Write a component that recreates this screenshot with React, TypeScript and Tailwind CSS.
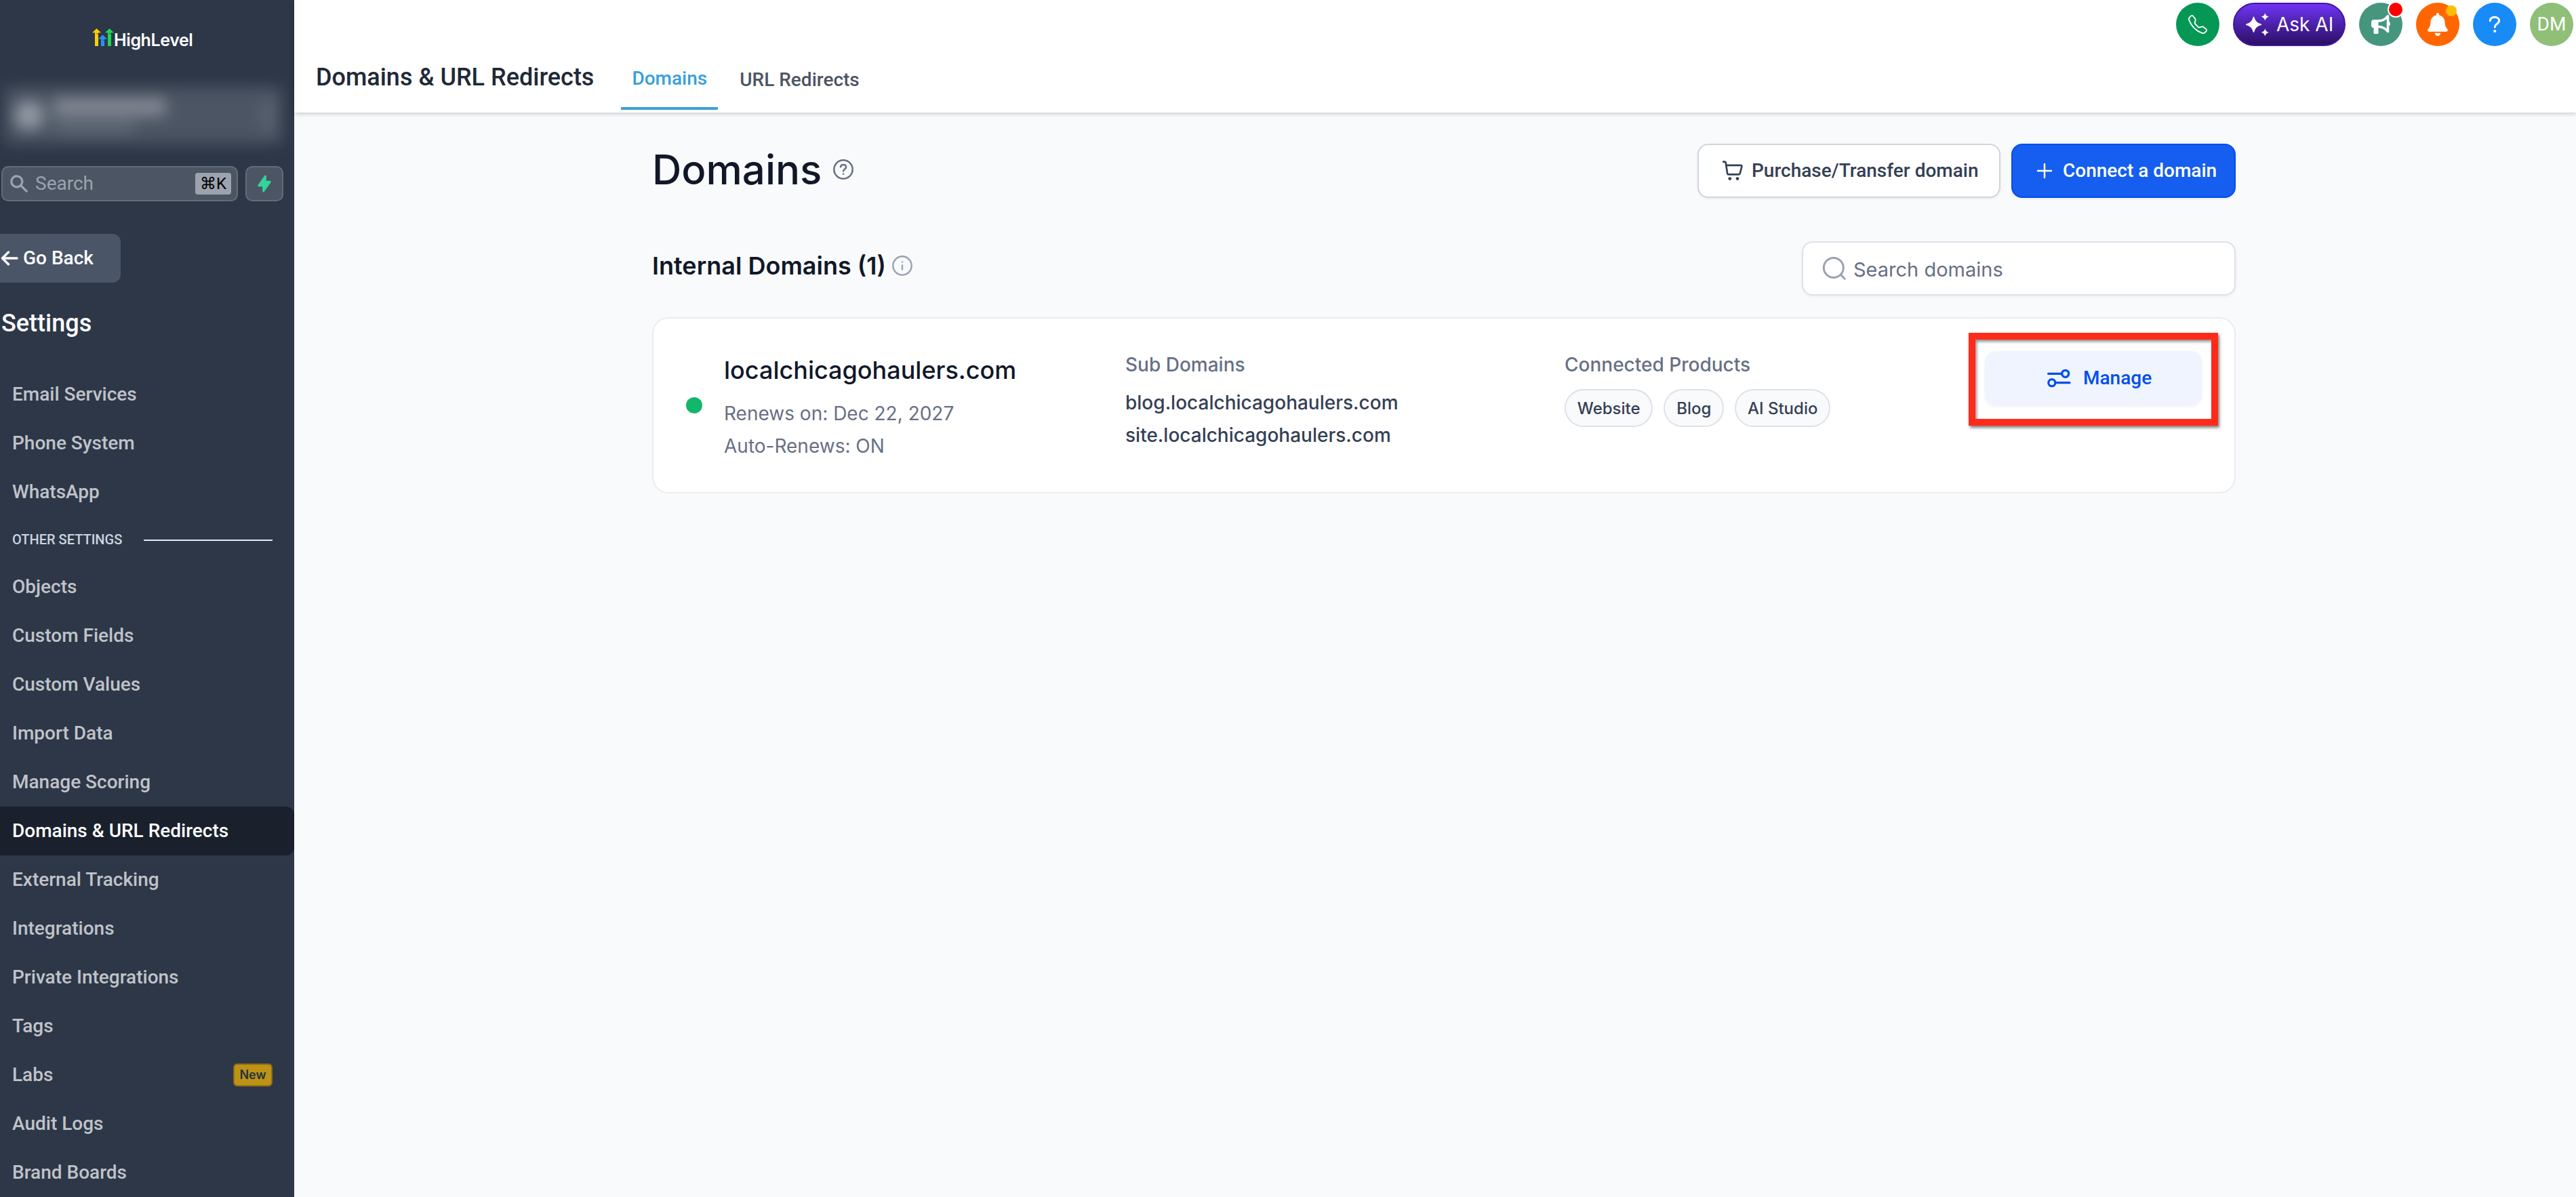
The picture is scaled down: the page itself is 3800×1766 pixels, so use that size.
import type { ReactNode } from "react";
import { BsTelephone } from "react-icons/bs";
import { FaBell, FaBullhorn } from "react-icons/fa6";
import { HiLightningBolt, HiSearch } from "react-icons/hi";

const primaryItems = ["Email Services", "Phone System", "WhatsApp"];

const otherItems: { label: string; active?: boolean; badge?: string }[] = [
  { label: "Objects" },
  { label: "Custom Fields" },
  { label: "Custom Values" },
  { label: "Import Data" },
  { label: "Manage Scoring" },
  { label: "Domains & URL Redirects", active: true },
  { label: "External Tracking" },
  { label: "Integrations" },
  { label: "Private Integrations" },
  { label: "Tags" },
  { label: "Labs", badge: "New" },
  { label: "Audit Logs" },
  { label: "Brand Boards" },
];

function Logo() {
  return (
    <div className="flex h-[46px] items-start pl-[136px]">
      <svg viewBox="0 0 32 28" className="mt-[2px] h-7 w-8 shrink-0">
        <path d="M0 6.3 6.5 0 13 6.3H9V26H4V6.3Z" fill="#ffcf00" />
        <path d="M9 15.8 15.5 9.2 22 15.8H18V26h-5V15.8Z" fill="#2b8ff5" />
        <path d="M19 6.3 25.5 0 32 6.3H28V26h-5V6.3Z" fill="#1ed654" />
        <path d="m4.500 7 4.500 2.600V7ZM13 16.500l5 2V16.500ZM23.500 7 28 9.600V7Z" fill="#000" fillOpacity=".28" />
      </svg>
      <span className="mt-px text-[25px] leading-9 font-semibold tracking-[-0.4px] text-white">HighLevel</span>
    </div>
  );
}

function NavItem({ label, active, badge }: { label: string; active?: boolean; badge?: string }) {
  return (
    <div
      className={
        active
          ? "flex h-[72px] items-center justify-between rounded-r-xl bg-[#1a202c] pr-8 pl-[18px] text-white"
          : "flex h-[72px] items-center justify-between pr-8 pl-[18px] text-[#c0c3c8]"
      }
    >
      <span>{label}</span>
      {badge && (
        <span className="flex h-[34px] w-[58px] items-center justify-center rounded-md border-2 border-[#8d6c17] bg-[#be9214] font-[Inter] text-[18px] leading-none font-semibold text-[#1f3442]">
          {badge}
        </span>
      )}
    </div>
  );
}

function Sidebar() {
  return (
    <aside className="flex h-full w-[434px] shrink-0 flex-col overflow-hidden bg-[#2d3748] pt-10 font-[Roboto] text-[28px] font-medium">
      <div className="font-[Inter]">
        <Logo />
      </div>

      <div className="mr-[18px] ml-[6px] mt-[42px] flex h-[84px] items-center rounded-lg bg-[#4b5563] pl-[15px] blur-[11px]">
        <div className="h-11 w-11 rounded-full bg-[#9299a3]" />
        <div className="ml-[14px] flex flex-1 flex-col gap-2">
          <div className="h-[26px] w-[166px] bg-[#858995]" />
          <div className="h-4 w-[120px] bg-[#616c77]" />
        </div>
        <div className="mr-3 h-12 w-4 bg-[#5c6674]" />
      </div>

      <div className="mt-[33px] flex gap-[11px] pl-[2px] font-normal">
        <div className="flex h-[52px] w-[349px] items-center rounded-[10px] border-2 border-[#646c79] bg-[#4b5563] pr-2">
          <HiSearch className="-mt-px ml-[8px] size-8 text-[#9ca3af]" />
          <span className="mb-[1px] ml-[8px] flex-1 text-[#9ca3af]">Search</span>
          <span className="flex h-8 w-[53px] items-center justify-center rounded bg-[#9ca3af] text-[24px] leading-none text-black">⌘K</span>
        </div>
        <div className="flex h-[52px] w-14 items-center justify-center rounded-[10px] border-2 border-[#646c79] bg-[#4b5563]">
          <HiLightningBolt className="size-7 text-[#34d399]" />
        </div>
      </div>

      <div className="mt-12 flex h-[72px] w-[178px] shrink-0 items-center rounded-r-xl bg-[#4a5568] text-white">
        <svg viewBox="0 0 26 22" className="ml-px h-[22px] w-[26px]" fill="none" stroke="currentColor" strokeWidth="3.400" strokeLinecap="round" strokeLinejoin="round">
          <path d="M24 11H3M11.500 2 2.500 11l9 9" />
        </svg>
        <span className="mb-px ml-[7px]">Go Back</span>
      </div>

      <h2 className="mt-9 mb-[45px] pl-[2px] text-[36px] leading-[48px] font-medium text-white">Settings</h2>

      <nav className="flex flex-col">
        {primaryItems.map((label) => (
          <NavItem key={label} label={label} />
        ))}
        <div className="flex h-[68px] items-center pr-8 pl-[18px]">
          <span className="mb-px text-[20px] leading-none text-[#cbd5e0]">OTHER SETTINGS</span>
          <span className="mt-[2px] ml-8 h-[2px] flex-1 bg-[#e2e8f0]" />
        </div>
        {otherItems.map((item) => (
          <NavItem key={item.label} {...item} />
        ))}
      </nav>
    </aside>
  );
}

function RoundButton({ className, children }: { className: string; children: ReactNode }) {
  return <div className={`relative flex size-16 items-center justify-center rounded-full text-white ${className}`}>{children}</div>;
}

function Header() {
  return (
    <header className="relative h-[166px] shrink-0 bg-white pt-1 font-[Roboto] shadow-[0_2px_6px_rgba(0,0,0,0.12),0_2px_8px_rgba(0,0,0,0.08)]">
      <div className="flex h-16 justify-end gap-5 pr-1">
        <RoundButton className="bg-[#059855]">
          <BsTelephone className="size-7" />
        </RoundButton>
        <div className="flex h-16 w-[166px] items-center rounded-full border-2 border-[#44169b] bg-linear-to-b from-[#7034f5] to-[#2b1065] text-white">
          <svg viewBox="0 0 34 36" className="ml-[17px] h-9 w-[34px]" fill="currentColor">
            <path d="M11.500 7.200C13 13.500 16 16.800 22.500 18.200 16 19.600 13 22.900 11.500 29.200 10 22.900 7 19.600.5 18.200 7 16.800 10 13.500 11.500 7.200Z" stroke="currentColor" strokeWidth="1.500" strokeLinejoin="round" />
            <path d="M28.300 1.100c.9 3.500 2.300 4.900 5.700 5.700-3.400.9-4.800 2.300-5.700 5.700-.9-3.400-2.300-4.800-5.700-5.700 3.400-.8 4.800-2.200 5.700-5.700ZM28.300 24.100c.9 3.500 2.300 4.900 5.700 5.700-3.400.9-4.800 2.300-5.700 5.700-.9-3.400-2.300-4.800-5.700-5.700 3.400-.8 4.800-2.200 5.700-5.700Z" />
          </svg>
          <span className="ml-[11px] font-[Inter] text-[28px] leading-9 font-normal whitespace-nowrap">Ask AI</span>
        </div>
        <RoundButton className="bg-[#46967e]">
          <FaBullhorn className="size-7" />
          <span className="absolute -top-[2px] -right-[2px] size-6 rounded-full border-2 border-white bg-[#ff0000]" />
        </RoundButton>
        <RoundButton className="bg-[#ff6600]">
          <FaBell className="size-[34px]" />
          <span className="absolute top-1 right-1 size-4 rounded-full bg-[#ffbc00]" />
        </RoundButton>
        <RoundButton className="bg-[#188bf6]">
          <svg viewBox="0 0 18 26" className="h-[26px] w-[18px]" fill="none" stroke="currentColor" strokeWidth="3" strokeLinecap="round">
            <path d="M2.300 7.600C2.600 4.200 5.300 2.300 9 2.300s6.600 2.100 6.600 5.300c0 4.600-6.300 4.700-6.300 9.400" />
            <circle cx="9.200" cy="23" r="2.100" fill="currentColor" stroke="none" />
          </svg>
        </RoundButton>
        <RoundButton className="bg-[#90bf78]">
          <span className="mb-px text-[28px] leading-8">DM</span>
        </RoundButton>
      </div>
      <div className="flex h-[98px] items-start pl-8 font-medium">
        <h1 className="mt-[22px] text-[36px] leading-[48px] font-medium text-[#1f2937]">Domains &amp; URL Redirects</h1>
        <nav className="ml-10 flex items-start gap-4 text-[28px] leading-10">
          <a className="mt-[28px] border-b-4 border-[#38a0db] px-4 pb-[22px] text-[#38a0db]">Domains</a>
          <a className="mt-[30px] px-4 text-[#4b5563]">URL Redirects</a>
        </nav>
      </div>
    </header>
  );
}

function DomainCard() {
  return (
    <section className="relative mt-8 flex h-[260px] items-start rounded-3xl border-2 border-[#eaecf0] bg-white text-[28px] leading-[48px] font-medium">
      <span className="mt-[116px] ml-12 size-6 rounded-full bg-[#12b76a]" />
      <div className="mt-[52px] ml-8 w-[592px] text-[#667085]">
        <h3 className="mb-4 text-[36px] leading-[48px] font-medium text-[#101828]">localchicagohaulers.com</h3>
        <p className="font-normal">Renews on: Dec 22, 2027</p>
        <p className="font-normal">Auto-Renews: ON</p>
      </div>
      <div className="mt-11 w-[648px] text-[#344054]">
        <p className="mb-2 text-[#667085]">Sub Domains</p>
        <p>blog.localchicagohaulers.com</p>
        <p>site.localchicagohaulers.com</p>
      </div>
      <div className="mt-11 w-[620px]">
        <p className="text-[#667085]">Connected Products</p>
        <div className="mt-3 flex gap-4 text-[24px] leading-[53px] text-[#344054]">
          {["Website", "Blog", "AI Studio"].map((name) => (
            <span key={name} className="h-14 rounded-full border-2 border-[#e0e1e8] bg-[#f9fafc] px-[16.800px]">
              {name}
            </span>
          ))}
        </div>
      </div>
      <button className="mt-12 flex h-20 w-80 items-center rounded-2xl bg-[#eff4ff] pl-[91px] font-[Roboto] font-medium text-[#004eeb] shadow-[0_2px_4px_rgba(16,24,40,0.06)]">
        <svg viewBox="0 0 36 28" className="h-7 w-9 shrink-0" fill="none" stroke="currentColor" strokeWidth="3.300" strokeLinecap="round">
          <path d="M2.600 7.300H22M14.500 20.700H34" />
          <circle cx="27.700" cy="7.300" r="5" />
          <circle cx="7.800" cy="20.700" r="5" />
        </svg>
        <span className="mb-px ml-[18px]">Manage</span>
      </button>
      <div className="pointer-events-none absolute top-[21px] right-6 h-[137px] w-[368px] border-[10px] border-[#fe2b1a] shadow-[2px_3px_4px_rgba(0,0,0,0.5),inset_2px_3px_4px_rgba(0,0,0,0.45)]" />
    </section>
  );
}

function DomainsPage() {
  return (
    <main className="ml-[528px] w-[2336px] pt-[46px] font-[Inter]">
      <div className="flex h-20 items-center">
        <h2 className="mb-1 text-[60px] leading-[76px] font-medium text-[#101828]">Domains</h2>
        <svg viewBox="0 0 32 32" className="mb-1 ml-4 size-8" fill="none" stroke="#667085" strokeWidth="2.500" strokeLinecap="round">
          <circle cx="16" cy="16" r="13.700" />
          <path d="M12 12.300c.5-2.200 2-3.300 4-3.300 2.400 0 4.100 1.500 4.100 3.600 0 3-4.100 3.400-4.100 6M16 22.700v.1" />
        </svg>
        <div className="ml-auto flex gap-4 font-[Roboto] text-[28px] font-medium">
          <button className="flex h-20 w-[447px] items-center rounded-2xl border-2 border-[#d0d5dd] bg-white pl-[34px] text-[#344054] shadow-[0_2px_4px_rgba(16,24,40,0.05)]">
            <svg viewBox="0 0 32 32" className="h-8 w-8 shrink-0" fill="none" stroke="currentColor" strokeWidth="2.700" strokeLinecap="round" strokeLinejoin="round">
              <path d="M2.200 2.700h1.600c1.200 0 1.800.6 2 1.700l2.300 15.200c.2 1.200.9 1.700 2 1.700h14.700c1.100 0 1.700-.5 2-1.600L29.300 10c.3-1.400-.2-2.100-1.600-2.100H6.300" />
              <circle cx="11.800" cy="27.600" r="2.400" fill="currentColor" stroke="none" />
              <circle cx="23" cy="27.600" r="2.400" fill="currentColor" stroke="none" />
            </svg>
            <span className="mb-px ml-3">Purchase/Transfer domain</span>
          </button>
          <button className="flex h-20 w-[331px] items-center rounded-2xl border-2 border-[#004eeb] bg-[#155eef] pl-[35px] text-white shadow-[0_2px_4px_rgba(16,24,40,0.05)]">
            <svg viewBox="0 0 24 24" className="size-6" fill="none" stroke="currentColor" strokeWidth="2.500" strokeLinecap="round">
              <path d="M12 2v20M2 12h20" />
            </svg>
            <span className="mb-px ml-[15px]">Connect a domain</span>
          </button>
        </div>
      </div>

      <div className="mt-16 flex h-20 items-center">
        <h3 className="mb-2 text-[36px] leading-[56px] font-semibold text-[#101828]">Internal Domains (1)</h3>
        <svg viewBox="0 0 32 32" className="mb-2 ml-2 size-8" fill="none" stroke="#98a2b3" strokeWidth="2.400" strokeLinecap="round">
          <circle cx="16" cy="16" r="13.700" />
          <path d="M16 15.500v6M16 10.300v.1" />
        </svg>
        <div className="ml-auto flex h-20 w-[640px] items-center rounded-2xl border-2 border-[#e0e1e8] bg-white pl-[28px] shadow-[0_2px_4px_rgba(16,24,40,0.05)]">
          <svg viewBox="0 0 36 36" className="size-9" fill="none" stroke="#98a2b3" strokeWidth="3" strokeLinecap="round">
            <circle cx="16.800" cy="17" r="14.500" />
            <path d="m28.500 28.500 4.700 4.700" />
          </svg>
          <span className="mt-[3px] ml-[10px] text-[29px] leading-9 text-[#667085]">Search domains</span>
        </div>
      </div>

      <DomainCard />
    </main>
  );
}

export default function App() {
  return (
    <div className="flex h-[1766px] w-[3800px] overflow-hidden bg-[#f9fafc]">
      <Sidebar />
      <div className="flex h-full flex-1 flex-col">
        <Header />
        <DomainsPage />
      </div>
    </div>
  );
}
